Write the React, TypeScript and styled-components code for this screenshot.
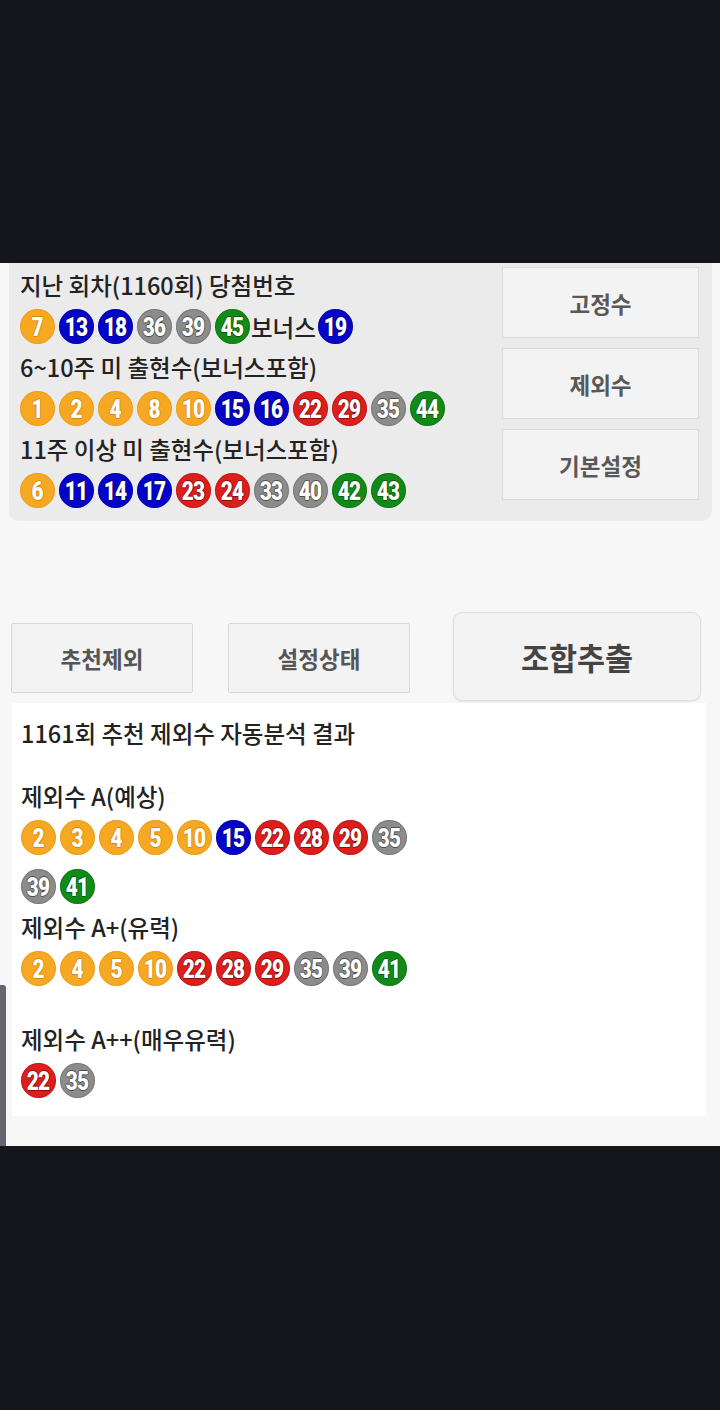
import React from "react";
import styled, { createGlobalStyle } from "styled-components";

const GlobalStyle = createGlobalStyle`
  html, body {
    margin: 0;
    padding: 0;
    background: #15161b;
  }
  * {
    box-sizing: border-box;
  }
`;

const KR_FONT = `"Noto Sans CJK KR", "Noto Sans", sans-serif`;

type BallTone = { bg: string; edge: string };

// lotto colour bands
const toneFor = (n: number): BallTone => {
  if (n <= 10) return { bg: "#f7a823", edge: "#d98a0c" };
  if (n <= 20) return { bg: "#0505c8", edge: "#03037a" };
  if (n <= 30) return { bg: "#de1d1d", edge: "#8c0c0c" };
  if (n <= 40) return { bg: "#8c8c8c", edge: "#4e4e4e" };
  return { bg: "#128a17", edge: "#075a0b" };
};

const Page = styled.div`
  width: 720px;
  height: 1410px;
  display: flex;
  flex-direction: column;
  font-family: ${KR_FONT};
`;

const DarkBand = styled.div<{ $h: number }>`
  height: ${(p) => p.$h}px;
  flex: none;
  background: #15161b;
`;

const Screen = styled.div`
  position: relative;
  height: 883px;
  flex: none;
  background: #f7f7f7;
  overflow: hidden;
`;

const ScrollThumb = styled.div`
  position: absolute;
  left: 0;
  top: 722px;
  width: 6px;
  height: 170px;
  background: #66646f;
  border-radius: 0 3px 0 0;
`;

const Panel = styled.div`
  margin: 0 8px 0 9px;
  height: 258px;
  background: #ebebeb;
  border-radius: 0 0 10px 10px;
  display: flex;
  padding: 2px 13px 0 11px;
`;

const InfoColumn = styled.div`
  flex: 1;
  display: flex;
  flex-direction: column;
`;

const Line = styled.div`
  height: 41px;
  line-height: 41px;
  font-size: 23.5px;
  font-weight: 500;
  color: #222;
  white-space: nowrap;
`;

const BallLine = styled.div`
  height: 41px;
  display: flex;
  align-items: center;
  gap: 4px;
`;

const BonusLabel = styled.span`
  font-size: 23.5px;
  font-weight: 500;
  color: #222;
  margin: 0 -2px 0 -3px;
`;

const SideButtons = styled.div`
  width: 197px;
  display: flex;
  flex-direction: column;
  gap: 10px;
  padding-top: 2px;
`;

const PanelButton = styled.div`
  height: 71px;
  background: #f3f3f3;
  border: 1.5px solid #dcdcdc;
  display: flex;
  align-items: center;
  justify-content: center;
  font-size: 22.5px;
  font-weight: 700;
  color: #585858;
`;

const ActionRow = styled.div`
  display: flex;
  align-items: flex-start;
  margin-top: 91px;
  padding-left: 11px;
`;

const ActionButton = styled.div<{ $gapLeft: number }>`
  width: 182px;
  height: 70px;
  margin-top: 11px;
  margin-left: ${(p) => p.$gapLeft}px;
  background: #f3f3f3;
  border: 1.5px solid #d8d8d8;
  border-radius: 2px;
  display: flex;
  align-items: center;
  justify-content: center;
  font-size: 22.5px;
  font-weight: 700;
  color: #555;
`;

const MainButton = styled.div`
  width: 248px;
  height: 89px;
  margin-left: 43px;
  background: #f3f3f3;
  border: 1.5px solid #dedede;
  border-radius: 9px;
  box-shadow: 0 1px 2px rgba(0, 0, 0, 0.08);
  display: flex;
  align-items: center;
  justify-content: center;
  font-size: 30.5px;
  font-weight: 700;
  color: #444;
`;

const ResultCard = styled.div`
  margin: 2px 14px 0 12px;
  background: #ffffff;
  padding: 10px 0 15px 9px;
`;

const CardTitle = styled(Line)`
  margin-bottom: 22px;
`;

const BallWrap = styled.div<{ $after: number }>`
  display: flex;
  flex-wrap: wrap;
  gap: 14px 4px;
  max-width: 400px;
  padding: 3px 0;
  margin-bottom: ${(p) => p.$after}px;
`;

const BallCircle = styled.div<{ $bg: string; $edge: string }>`
  width: 35px;
  height: 35px;
  flex: none;
  border-radius: 50%;
  background: ${(p) => p.$bg};
  box-shadow: inset 0 0 0 1px ${(p) => p.$edge}55;
  display: flex;
  align-items: center;
  justify-content: center;
  font-family: Roboto, "Liberation Sans", sans-serif;
  font-weight: 900;
  font-size: 26px;
  line-height: 1;
  letter-spacing: -1px;
  color: #ffffff;
  text-shadow: -1px 0 ${(p) => p.$edge}, 1px 0 ${(p) => p.$edge},
    0 -1px ${(p) => p.$edge}, 0 1px ${(p) => p.$edge};
`;

const Digits = styled.span`
  display: inline-block;
  transform: scaleX(0.8);
  margin-left: -1px;
`;

function Ball({ n }: { n: number }) {
  const tone = toneFor(n);
  return (
    <BallCircle $bg={tone.bg} $edge={tone.edge}>
      <Digits>{n}</Digits>
    </BallCircle>
  );
}

const lastDraw = [7, 13, 18, 36, 39, 45];
const unseen6to10 = [1, 2, 4, 8, 10, 15, 16, 22, 29, 35, 44];
const unseen11plus = [6, 11, 14, 17, 23, 24, 33, 40, 42, 43];

const groups = [
  { label: "제외수 A(예상)", nums: [2, 3, 4, 5, 10, 15, 22, 28, 29, 35, 39, 41], after: 0 },
  { label: "제외수 A+(유력)", nums: [2, 4, 5, 10, 22, 28, 29, 35, 39, 41], after: 30 },
  { label: "제외수 A++(매우유력)", nums: [22, 35], after: 0 },
];

export default function App() {
  return (
    <Page>
      <GlobalStyle />
      <DarkBand $h={263} />
      <Screen>
        <Panel>
          <InfoColumn>
            <Line>지난 회차(1160회) 당첨번호</Line>
            <BallLine>
              {lastDraw.map((n) => (
                <Ball key={n} n={n} />
              ))}
              <BonusLabel>보너스</BonusLabel>
              <Ball n={19} />
            </BallLine>
            <Line>6~10주 미 출현수(보너스포함)</Line>
            <BallLine>
              {unseen6to10.map((n) => (
                <Ball key={n} n={n} />
              ))}
            </BallLine>
            <Line>11주 이상 미 출현수(보너스포함)</Line>
            <BallLine>
              {unseen11plus.map((n) => (
                <Ball key={n} n={n} />
              ))}
            </BallLine>
          </InfoColumn>
          <SideButtons>
            <PanelButton>고정수</PanelButton>
            <PanelButton>제외수</PanelButton>
            <PanelButton>기본설정</PanelButton>
          </SideButtons>
        </Panel>

        <ActionRow>
          <ActionButton $gapLeft={0}>추천제외</ActionButton>
          <ActionButton $gapLeft={35}>설정상태</ActionButton>
          <MainButton>조합추출</MainButton>
        </ActionRow>

        <ResultCard>
          <CardTitle>1161회 추천 제외수 자동분석 결과</CardTitle>
          {groups.map((g) => (
            <React.Fragment key={g.label}>
              <Line>{g.label}</Line>
              <BallWrap $after={g.after}>
                {g.nums.map((n) => (
                  <Ball key={n} n={n} />
                ))}
              </BallWrap>
            </React.Fragment>
          ))}
        </ResultCard>

        <ScrollThumb />
      </Screen>
      <DarkBand $h={264} />
    </Page>
  );
}
